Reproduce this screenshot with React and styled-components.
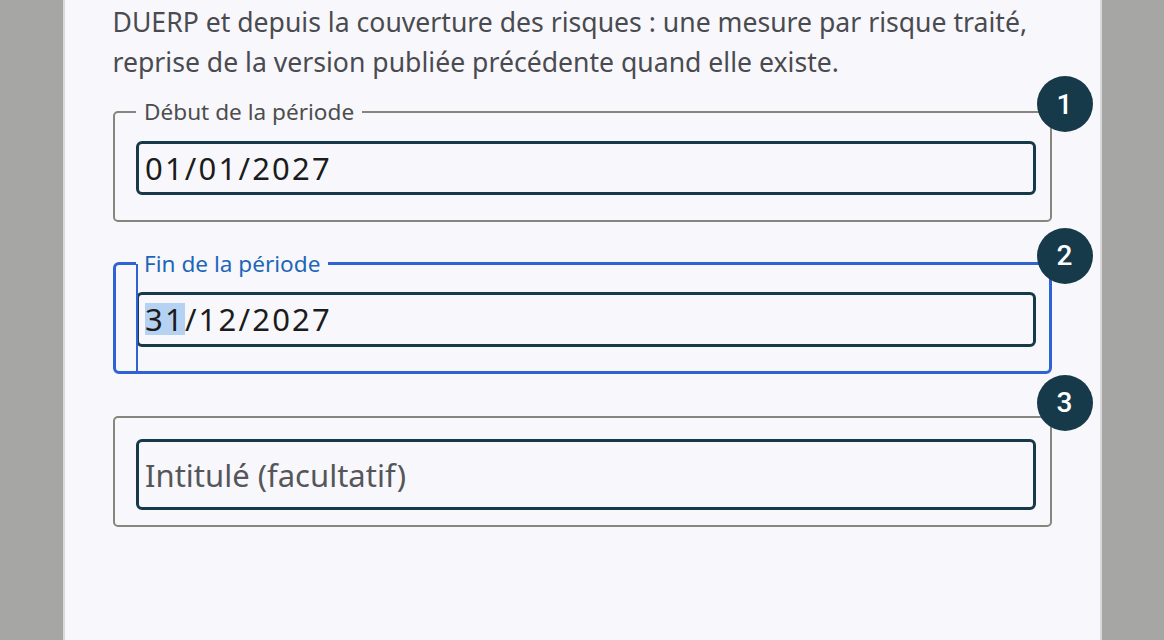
import React from "react";
import styled, { createGlobalStyle, css } from "styled-components";

const Global = createGlobalStyle`
  html, body { margin: 0; padding: 0; }
  body {
    background: #a6a6a4;
    overflow: hidden;
    font-family: "Noto Sans", Roboto, "Liberation Sans", sans-serif;
  }
`;

const Page = styled.div`
  height: 640px;
  display: flex;
  justify-content: center;
`;

const Panel = styled.main`
  box-sizing: border-box;
  width: 1039px;
  height: 640px;
  background: #f8f8fc;
  border-left: 2px solid #d9d9d9;
  border-right: 2px solid #d9d9d9;
  padding: 3px 48px 0 48px;
`;

const Intro = styled.p`
  margin: 0 0 17px 0;
  font-size: 26.6px;
  line-height: 39.5px;
  color: #4a4b50;
`;

const Stack = styled.div`
  display: flex;
  flex-direction: column;
  gap: 29px;
`;

const Row = styled.div`
  position: relative;
  ${(p) => p.$noLegend && css`padding-top: 13px;`}
  ${(p) =>
    p.$focused &&
    css`
      &::before {
        content: "";
        position: absolute;
        left: 23px;
        top: 13px;
        bottom: 1px;
        width: 2.5px;
        background: #2f62d3;
      }
    `}
`;

const Field = styled.fieldset`
  margin: 0;
  min-width: 0;
  border-style: solid;
  border-color: ${(p) => (p.$focused ? "#2f62d3" : "#86867f")};
  border-width: ${(p) => (p.$focused ? "3px" : "2px")};
  border-radius: ${(p) => (p.$focused ? "6px" : "5px")};
  padding: ${(p) => p.$pad};
`;

const Legend = styled.legend`
  padding: 0 8px;
  font-size: 22.6px;
  line-height: 26px;
  color: ${(p) => (p.$focused ? "#1f66b8" : "#4d4d4d")};
`;

const InputBox = styled.div`
  box-sizing: border-box;
  height: ${(p) => p.$h}px;
  border: 3px solid #173a4a;
  border-radius: 6px;
  padding: 0 6px;
  display: flex;
  align-items: center;
  font-size: 31px;
  letter-spacing: ${(p) => (p.$placeholder ? "0" : "2.2px")};
  color: ${(p) => (p.$placeholder ? "#55565a" : "#1c1c1c")};
  white-space: pre;
`;

const Selected = styled.span`
  background: #b5d2f3;
  line-height: 32px;
`;

const Badge = styled.span`
  position: absolute;
  right: -41px;
  top: ${(p) => p.$top}px;
  width: 56px;
  height: 56px;
  border-radius: 50%;
  background: #163a4a;
  color: #ffffff;
  display: flex;
  align-items: center;
  justify-content: center;
  font-size: 28px;
  font-weight: 500;
  font-family: Roboto, "Liberation Sans", sans-serif;
`;

export default function App() {
  return (
    <>
      <Global />
      <Page>
        <Panel>
          <Intro>
            DUERP et depuis la couverture des risques : une mesure par risque traité,
            <br />
            reprise de la version publiée précédente quand elle existe.
          </Intro>
          <Stack>
            <Row>
              <Field $pad="16px 13.5px 24.5px 21.5px">
                <Legend>Début de la période</Legend>
                <InputBox $h={54}>01/01/2027</InputBox>
              </Field>
              <Badge $top={-23}>1</Badge>
            </Row>
            <Row $focused>
              <Field $focused $pad="15px 12.5px 24px 20.5px">
                <Legend $focused>Fin de la période</Legend>
                <InputBox $h={55}>
                  <Selected>31</Selected>/12/2027
                </InputBox>
              </Field>
              <Badge $top={-23}>2</Badge>
            </Row>
            <Row $noLegend>
              <Field $pad="21.5px 13.5px 14.5px 21.5px">
                <InputBox $h={71} $placeholder>
                  Intitulé (facultatif)
                </InputBox>
              </Field>
              <Badge $top={-28}>3</Badge>
            </Row>
          </Stack>
        </Panel>
      </Page>
    </>
  );
}
